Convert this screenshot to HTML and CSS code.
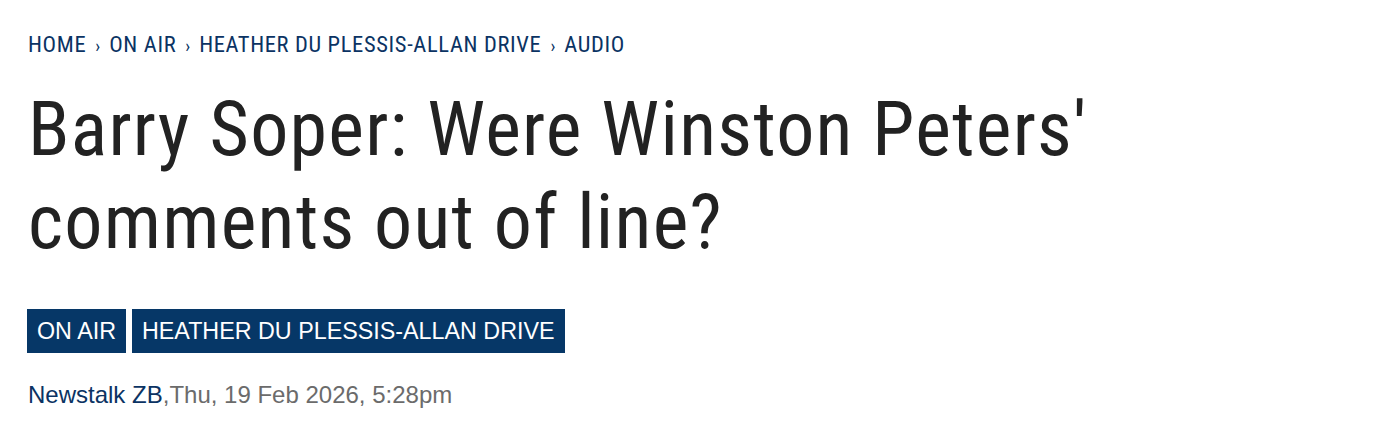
FILE: index.html
```html
<!DOCTYPE html>
<html lang="en">
<head>
<meta charset="utf-8">
<title>Barry Soper: Were Winston Peters' comments out of line?</title>
<link rel="stylesheet" href="styles.css">
</head>
<body>
<main class="article-header">
  <nav class="breadcrumb">
    <a href="#">HOME</a><span class="sep">›</span><a href="#">ON AIR</a><span class="sep">›</span><a href="#">HEATHER DU PLESSIS-ALLAN DRIVE</a><span class="sep">›</span><a href="#">AUDIO</a>
  </nav>
  <h1 class="headline">Barry Soper: Were Winston Peters' comments out of line?</h1>
  <div class="tags">
    <a class="tag" href="#">ON AIR</a>
    <a class="tag" href="#">HEATHER DU PLESSIS-ALLAN DRIVE</a>
  </div>
  <p class="byline"><a href="#" class="source">Newstalk ZB</a>,<span class="date">Thu, 19 Feb 2026, 5:28pm</span></p>
</main>
</body>
</html>
```
FILE: styles.css
```css
body {
  margin: 0;
  background: #ffffff;
}
.article-header {
  padding: 32px 28px 0 27px;
}
.breadcrumb {
  padding-left: 1px;
  font-family: "Roboto Condensed", Roboto, sans-serif;
  font-stretch: condensed;
  font-size: 22.5px;
  letter-spacing: 0.65px;
  line-height: 24px;
  color: #0b3363;
}
.breadcrumb a {
  color: #0b3363;
  text-decoration: none;
}
.breadcrumb .sep {
  display: inline-block;
  margin: 0 9px 0 9px;
  font-size: 18px;
  letter-spacing: 0;
}
.headline {
  margin: 25px 0 0 0;
  padding-left: 1px;
  max-width: 1120px;
  font-family: "Roboto Condensed", Roboto, sans-serif;
  font-stretch: condensed;
  font-weight: 400;
  font-size: 76px;
  letter-spacing: 1.25px;
  line-height: 93px;
  color: #222222;
}
.tags {
  display: flex;
  gap: 6px;
  margin-top: 40px;
}
.tag {
  display: block;
  height: 44px;
  line-height: 44px;
  padding: 0 10px;
  background: #063767;
  color: #ffffff;
  font-family: "Liberation Sans", Arial, sans-serif;
  font-size: 23.3px;
  text-decoration: none;
}
.byline {
  margin: 28px 0 0 1px;
  font-family: "Liberation Sans", Arial, sans-serif;
  font-size: 24px;
  line-height: 28px;
  color: #6b6b6b;
}
.source {
  color: #0b3363;
  text-decoration: none;
}
```
